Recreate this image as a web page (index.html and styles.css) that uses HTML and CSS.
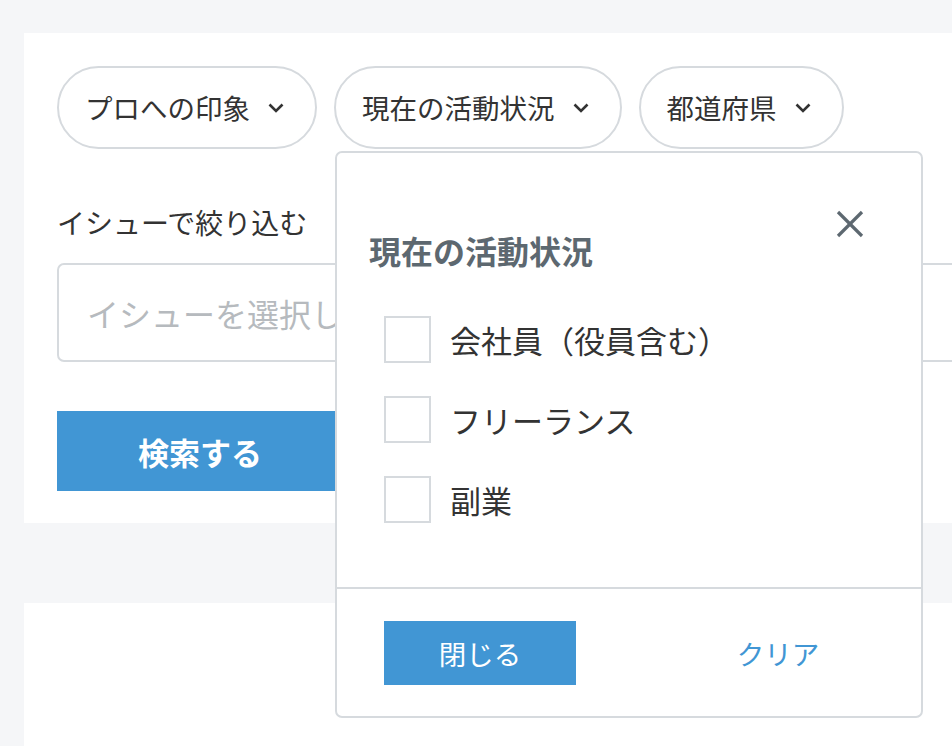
FILE: index.html
```html
<!DOCTYPE html>
<html lang="ja">
<head>
<meta charset="utf-8">
<title>検索</title>
<link rel="stylesheet" href="styles.css">
</head>
<body>
<div class="page">
  <section class="card search-card">
    <div class="chips">
      <button class="chip"><span>プロへの印象</span><svg class="chev" viewBox="0 0 16 10"><polyline points="1.5,1.5 8,8 14.5,1.5"/></svg></button>
      <div class="chip-wrap">
        <button class="chip"><span>現在の活動状況</span><svg class="chev" viewBox="0 0 16 10"><polyline points="1.5,1.5 8,8 14.5,1.5"/></svg></button>
        <div class="dropdown">
          <div class="dd-head">
            <h2 class="dd-title">現在の活動状況</h2>
            <svg class="dd-close" viewBox="0 0 28 28"><line x1="2" y1="2" x2="26" y2="26"/><line x1="26" y1="2" x2="2" y2="26"/></svg>
          </div>
          <ul class="options">
            <li class="option"><span class="box"></span><span class="opt-label">会社員（役員含む）</span></li>
            <li class="option"><span class="box"></span><span class="opt-label">フリーランス</span></li>
            <li class="option"><span class="box"></span><span class="opt-label">副業</span></li>
          </ul>
          <div class="dd-foot">
            <button class="btn-close">閉じる</button>
            <button class="btn-clear">クリア</button>
          </div>
        </div>
      </div>
      <button class="chip"><span>都道府県</span><svg class="chev" viewBox="0 0 16 10"><polyline points="1.5,1.5 8,8 14.5,1.5"/></svg></button>
    </div>
    <div class="label">イシューで絞り込む</div>
    <div class="input-wrap">
      <div class="input">イシューを選択してください</div>
    </div>
    <button class="btn-search">検索する</button>
  </section>
  <section class="card results-card"></section>
</div>
</body>
</html>
```

FILE: styles.css
```css
* { box-sizing: border-box; }
html, body {
  margin: 0;
  padding: 0;
  background: #f5f6f8;
  font-family: "Noto Sans CJK JP", "Noto Sans", sans-serif;
  color: #333;
  overflow: hidden;
}
.page {
  padding: 33px 0 0 24px;
  width: 952px;
}
.card {
  background: #fff;
}
.search-card {
  padding: 33px 0 32px 33px;
}
.chips {
  display: flex;
  gap: 17px;
  align-items: flex-start;
}
.chip-wrap {
  position: relative;
}
.chip {
  display: flex;
  align-items: center;
  height: 83px;
  padding: 0 31px 0 26px;
  border: 2px solid #d6dade;
  border-radius: 42px;
  background: #fff;
  font-family: inherit;
  font-size: 27.5px;
  color: #333;
  line-height: 1;
}
.chev {
  width: 16px;
  height: 10px;
  margin-left: 18px;
  fill: none;
  stroke: #333;
  stroke-width: 2.6;
}
.label {
  margin-top: 53px;
  font-size: 28px;
  line-height: 40px;
  color: #333;
}
.input-wrap {
  margin-top: 21px;
  overflow: hidden;
}
.input {
  width: calc(100% + 40px);
  height: 99px;
  border: 2px solid #d6dade;
  border-radius: 7px;
  padding-left: 28px;
  display: flex;
  align-items: center;
  font-size: 32px;
  color: #b6babe;
  white-space: nowrap;
}
.btn-search {
  display: block;
  margin-top: 49px;
  width: 286px;
  height: 80px;
  border: 0;
  background: #4196d4;
  color: #fff;
  font-family: inherit;
  font-size: 31px;
  font-weight: 700;
}
.results-card {
  margin-top: 80px;
  height: 144px;
}
.dropdown {
  position: absolute;
  top: calc(100% + 2px);
  left: 1px;
  width: 588px;
  height: 567px;
  background: #fff;
  border: 2px solid #d6dade;
  border-radius: 7px;
  z-index: 5;
  display: flex;
  flex-direction: column;
}
.dd-head {
  display: flex;
  justify-content: space-between;
  align-items: flex-start;
  padding: 57px 57px 0 32px;
}
.dd-title {
  margin: 19px 0 0;
  font-size: 32px;
  line-height: 42px;
  font-weight: 700;
  color: #5d6870;
}
.dd-close {
  width: 28px;
  height: 28px;
  stroke: #5d6870;
  stroke-width: 3.2;
}
.options {
  list-style: none;
  margin: 45px 0 0;
  padding: 0 0 0 47px;
  display: flex;
  flex-direction: column;
  gap: 33px;
}
.option {
  display: flex;
  align-items: center;
  height: 47px;
}
.box {
  width: 47px;
  height: 47px;
  border: 2px solid #d6dade;
  flex: none;
}
.opt-label {
  margin-left: 19px;
  font-size: 31px;
  line-height: 1;
  color: #333;
}
.dd-foot {
  margin-top: auto;
  border-top: 2px solid #d6dade;
  padding: 32px 47px 31px;
  display: flex;
  justify-content: space-between;
}
.btn-close, .btn-clear {
  width: 192px;
  height: 64px;
  border: 0;
  font-family: inherit;
  font-size: 27.5px;
}
.btn-close {
  background: #4196d4;
  color: #fff;
}
.btn-clear {
  background: transparent;
  color: #4196d4;
}
```
